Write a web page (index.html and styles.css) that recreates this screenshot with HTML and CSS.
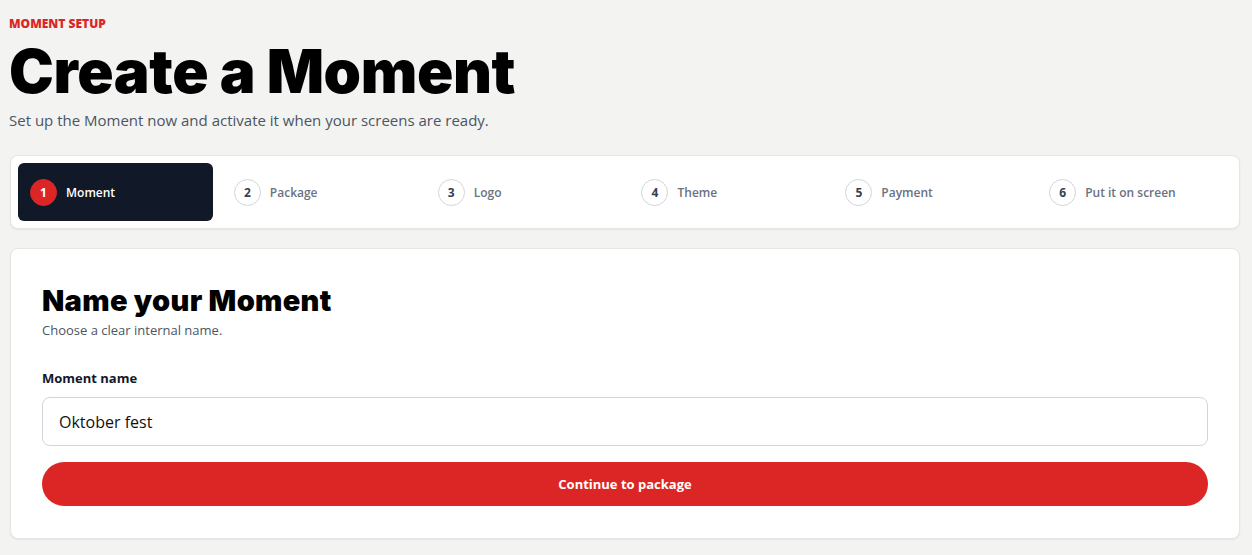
FILE: index.html
```html
<!DOCTYPE html>
<html lang="en">
<head>
	<meta charset="UTF-8">
	<meta name="viewport" content="width=device-width, initial-scale=1.0">
	<title>Create a Moment</title>

	<link rel="stylesheet" href="styles.css">
</head>
<body>
	<div class="page">
		<header class="intro">
			<div class="intro__eyebrow">MOMENT SETUP</div>
			<h1 class="intro__title">Create a Moment</h1>
			<p class="intro__lead">Set up the Moment now and activate it when your screens are ready.</p>
		</header>

		<nav class="steps">
			<div class="step step--active"><span class="step__num">1</span><span class="step__label">Moment</span></div>
			<div class="step"><span class="step__num">2</span><span class="step__label">Package</span></div>
			<div class="step"><span class="step__num">3</span><span class="step__label">Logo</span></div>
			<div class="step"><span class="step__num">4</span><span class="step__label">Theme</span></div>
			<div class="step"><span class="step__num">5</span><span class="step__label">Payment</span></div>
			<div class="step"><span class="step__num">6</span><span class="step__label">Put it on screen</span></div>
		</nav>

		<section class="card">
			<h2 class="card__title">Name your Moment</h2>
			<p class="card__hint">Choose a clear internal name.</p>
			<label class="field__label" for="moment-name">Moment name</label>
			<input class="field__input" id="moment-name" type="text" value="Oktober fest">
			<button class="button">Continue to package</button>
		</section>
	</div>
</body>
</html>
```

FILE: styles.css
```css
* { box-sizing: border-box }
body {
	margin: 0;
	background: #f3f3f2;
	color: #111;
	font-family: 'Open Sans', 'Noto Sans', sans-serif;
}
.page {
	padding: 15px 12px 16px 9px;
}
.intro__eyebrow {
	color: #dc2626;
	font-size: 12px;
	font-weight: 800;
	line-height: 18px;
}
.intro__title {
	margin: 2px 0 0;
	font-family: 'Inter', sans-serif;
	font-size: 60px;
	font-weight: 900;
	letter-spacing: -0.4px;
	line-height: 72px;
	color: #000;
}
.intro__lead {
	margin: 2px 0 0;
	font-size: 15px;
	color: #4b5563;
	line-height: 22px;
}
.steps {
	display: grid;
	grid-template-columns: repeat(6, 1fr);
	gap: 9px;
	margin: 24px 0 0 1px;
	padding: 7px;
	background: #fff;
	border: 1px solid #e6e6e6;
	border-radius: 8px;
	box-shadow: 0 1px 2px rgba(0, 0, 0, .06);
}
.step {
	display: flex;
	align-items: center;
	gap: 9px;
	height: 58px;
	padding: 0 12px;
	border-radius: 6px;
	color: #6b7280;
	font-size: 12px;
	font-weight: 600;
}
.step__num {
	display: flex;
	width: 27px;
	height: 27px;
	flex: none;
	justify-content: center;
	align-items: center;
	border: 1px solid #d1d5db;
	border-radius: 50%;
	color: #374151;
	font-size: 12px;
	font-weight: 700;
}
.step--active {
	background: #111827;
	color: #fff;
}
.step--active .step__num {
	background: #dc2626;
	border-color: #dc2626;
	color: #fff;
}
.card {
	display: flex;
	flex-direction: column;
	margin: 19px 0 0 1px;
	padding: 32px 31px 32px 31px;
	background: #fff;
	border: 1px solid #e6e6e6;
	border-radius: 8px;
	box-shadow: 0 1px 2px rgba(0, 0, 0, .06);
}
.card__title {
	margin: 0;
	font-family: 'Inter', sans-serif;
	font-size: 29px;
	font-weight: 900;
	letter-spacing: 0.3px;
	line-height: 40px;
	color: #000;
}
.card__hint {
	margin: 0;
	font-size: 13px;
	color: #4b5563;
	line-height: 18px;
}
.field__label {
	margin-top: 30px;
	font-size: 13px;
	font-weight: 700;
	color: #111827;
	line-height: 18px;
}
.field__input {
	height: 49px;
	margin-top: 10px;
	padding: 0 16px;
	border: 1px solid #d1d5db;
	border-radius: 8px;
	font-family: inherit;
	font-size: 16px;
	color: #111;
	outline: none;
}
.button {
	height: 44px;
	margin-top: 16px;
	border: 0;
	border-radius: 22px;
	background: #dc2626;
	color: #fff;
	font-family: inherit;
	font-size: 13px;
	font-weight: 700;
	cursor: pointer;
}
```
